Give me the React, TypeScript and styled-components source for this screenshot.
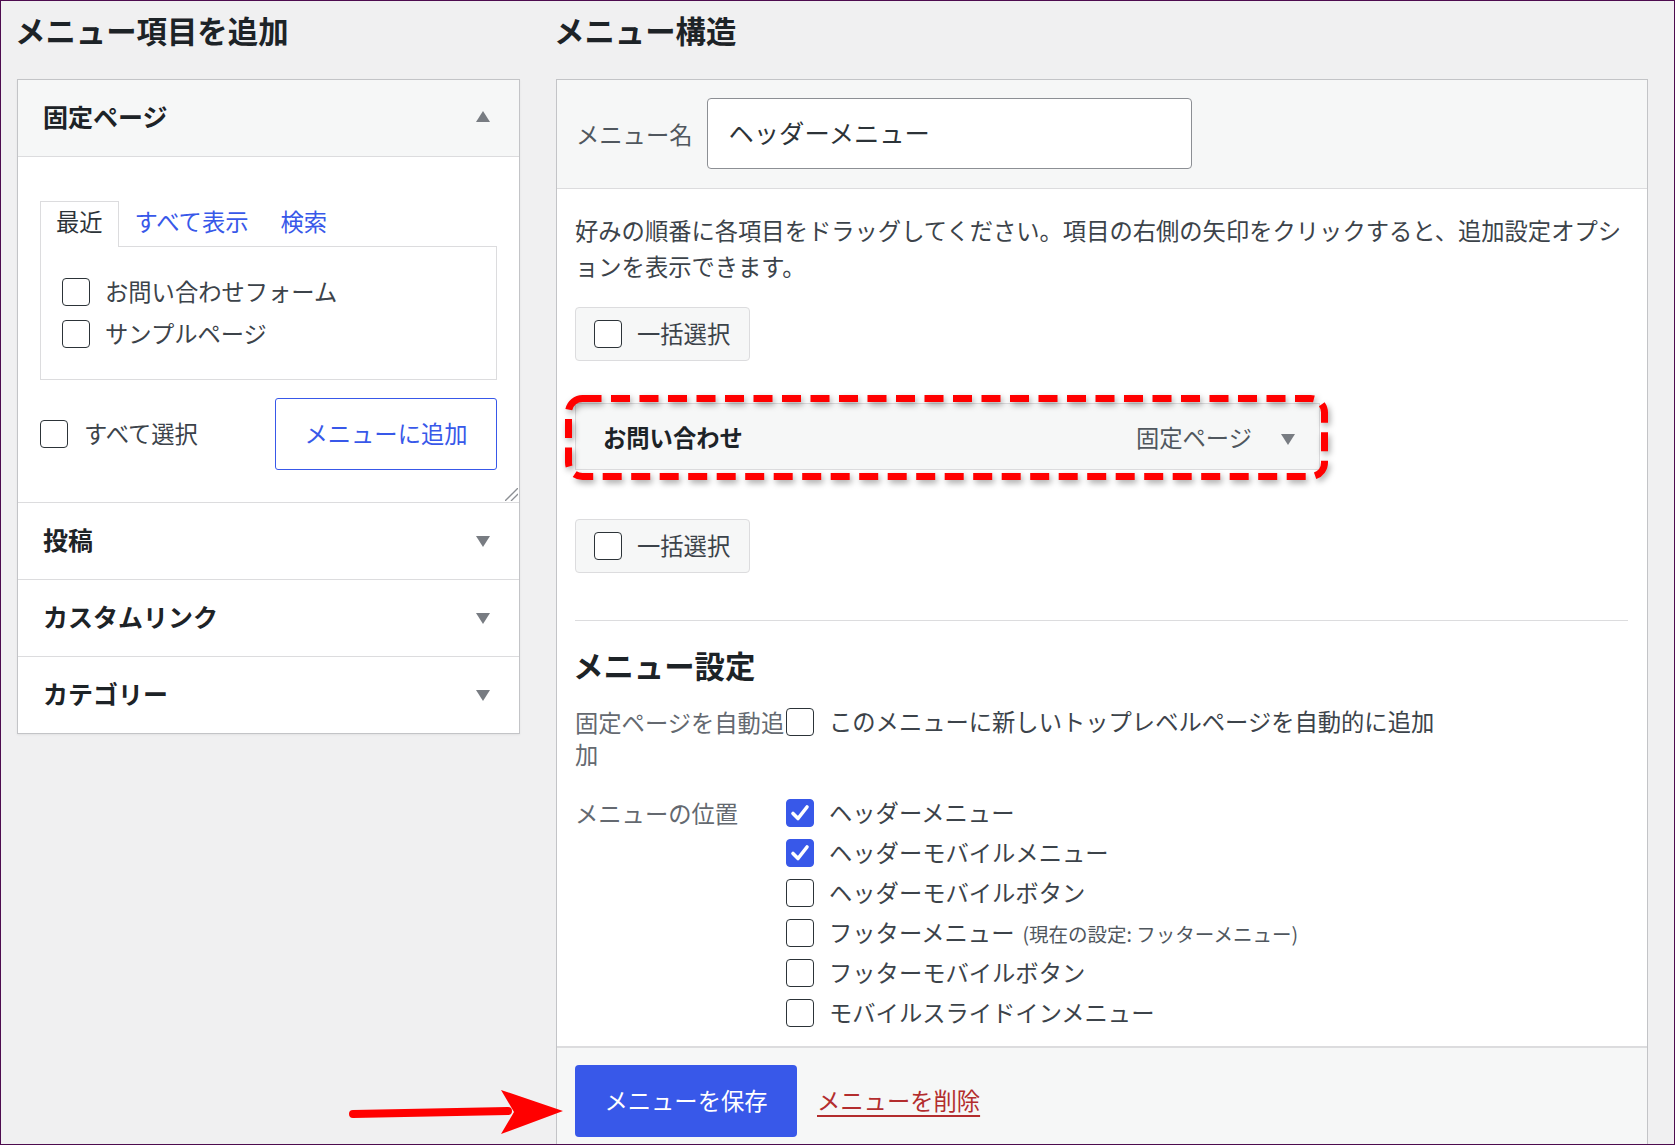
import React from "react";
import styled, { createGlobalStyle } from "styled-components";

const blue = "#3858e9";

const Caret: React.FC<{ up?: boolean }> = ({ up }) => (
  <CaretIcon $up={up} width="14" height="11" viewBox="0 0 14 11">
    <polygon
      points={up ? "7,0 14,11 0,11" : "0,0 14,0 7,11"}
      fill="#787c82"
    />
  </CaretIcon>
);

const Checkbox: React.FC<{ checked?: boolean }> = ({ checked }) => (
  <Box $checked={checked}>
    {checked && (
      <svg width="22" height="22" viewBox="0 0 22 22">
        <path
          d="M4 11.5 L9 16.5 L18 5"
          fill="none"
          stroke="#fff"
          strokeWidth="3.6"
          strokeLinecap="round"
          strokeLinejoin="round"
        />
      </svg>
    )}
  </Box>
);

const locations = [
  { label: "ヘッダーメニュー", checked: true },
  { label: "ヘッダーモバイルメニュー", checked: true },
  { label: "ヘッダーモバイルボタン" },
  { label: "フッターメニュー", note: "(現在の設定: フッターメニュー)" },
  { label: "フッターモバイルボタン" },
  { label: "モバイルスライドインメニュー" },
];

const App: React.FC = () => {
  return (
    <>
      <GlobalStyle />
      <Page>
        <LeftColumn>
          <PageTitle>メニュー項目を追加</PageTitle>
          <Panel>
            <SectionHeader $open>
              固定ページ
              <Caret up />
            </SectionHeader>
            <SectionBody>
              <TabList>
                <Tab $active>最近</Tab>
                <Tab>すべて表示</Tab>
                <Tab>検索</Tab>
              </TabList>
              <TabPanel>
                <ItemRow>
                  <Checkbox />
                  <Label>お問い合わせフォーム</Label>
                </ItemRow>
                <ItemRow>
                  <Checkbox />
                  <Label>サンプルページ</Label>
                </ItemRow>
              </TabPanel>
              <PanelActions>
                <SelectAll>
                  <Checkbox />
                  <Label>すべて選択</Label>
                </SelectAll>
                <OutlineButton>メニューに追加</OutlineButton>
              </PanelActions>
              <ResizeGrip width="13" height="13" viewBox="0 0 13 13">
                <line x1="13" y1="0" x2="0" y2="13" stroke="#8c8f94" strokeWidth="1.3" />
                <line x1="13" y1="6" x2="6" y2="13" stroke="#8c8f94" strokeWidth="1.3" />
              </ResizeGrip>
            </SectionBody>
            <SectionHeader>
              投稿
              <Caret />
            </SectionHeader>
            <SectionHeader>
              カスタムリンク
              <Caret />
            </SectionHeader>
            <SectionHeader>
              カテゴリー
              <Caret />
            </SectionHeader>
          </Panel>
        </LeftColumn>

        <RightColumn>
          <PageTitle>メニュー構造</PageTitle>
          <StructurePanel>
            <NameBar>
              <NameLabel>メニュー名</NameLabel>
              <NameInput value="ヘッダーメニュー" readOnly />
            </NameBar>
            <EditBody>
              <Description>
                好みの順番に各項目をドラッグしてください。項目の右側の矢印をクリックすると、追加設定オプションを表示できます。
              </Description>
              <BulkSelect $top={23}>
                <Checkbox />
                <Label>一括選択</Label>
              </BulkSelect>
              <MenuItemWrap>
                <MenuItem>
                  <ItemTitle>お問い合わせ</ItemTitle>
                  <ItemType>固定ページ</ItemType>
                  <Caret />
                </MenuItem>
                <Highlight width="763" height="85" viewBox="0 0 763 85">
                  <rect
                    x="3.5"
                    y="3.5"
                    width="756"
                    height="78"
                    rx="14"
                    fill="none"
                    stroke="#ff0000"
                    strokeWidth="7"
                    strokeDasharray="19 9.5"
                  />
                </Highlight>
              </MenuItemWrap>
              <BulkSelect $top={49}>
                <Checkbox />
                <Label>一括選択</Label>
              </BulkSelect>
              <Divider />
              <SettingsTitle>メニュー設定</SettingsTitle>
              <SettingsGrid>
                <FieldLabel $lh={32}>固定ページを自動追加</FieldLabel>
                <OptionRow $h={32}>
                  <Checkbox />
                  <Label>このメニューに新しいトップレベルページを自動的に追加</Label>
                </OptionRow>
                <FieldLabel $lh={40}>メニューの位置</FieldLabel>
                <OptionList>
                  {locations.map((loc) => (
                    <OptionRow $h={40} key={loc.label}>
                      <Checkbox checked={loc.checked} />
                      <Label>
                        {loc.label}
                        {loc.note && <Note>{loc.note}</Note>}
                      </Label>
                    </OptionRow>
                  ))}
                </OptionList>
              </SettingsGrid>
            </EditBody>
            <Footer>
              <PrimaryButton>メニューを保存</PrimaryButton>
              <DeleteLink href="#">メニューを削除</DeleteLink>
            </Footer>
          </StructurePanel>
        </RightColumn>

        <Arrow width="240" height="60" viewBox="0 0 240 60">
          <line x1="13" y1="34" x2="168" y2="31" stroke="#ff0000" strokeWidth="8" strokeLinecap="round" />
          <polygon points="161,10 223,31 161,54 174,32" fill="#ff0000" />
        </Arrow>
      </Page>
    </>
  );
};

export default App;

const GlobalStyle = createGlobalStyle`
  body {
    margin: 0;
    background: #f0f0f1;
    font-family: "Noto Sans CJK JP", "Noto Sans", sans-serif;
  }
`;

const Page = styled.div`
  position: relative;
  width: 1675px;
  height: 1145px;
  box-sizing: border-box;
  border: 1px solid #4d0b4f;
  background: #f0f0f1;
  overflow: hidden;
  display: flex;
  gap: 36px;
  padding: 9px 25px 0 16px;
  font-family: "Noto Sans CJK JP", "Noto Sans", sans-serif;
  font-size: 23.3px;
  color: #3c434a;
`;

const LeftColumn = styled.div`
  width: 503px;
  flex: none;
`;

const RightColumn = styled.div`
  width: 1092px;
  flex: none;
`;

const PageTitle = styled.h2`
  margin: 0 0 29px -2px;
  font-size: 30.4px;
  line-height: 40px;
  font-weight: 700;
  color: #1d2327;
`;

const Panel = styled.div`
  background: #fff;
  border: 1px solid #c3c4c7;
  box-shadow: 0 1px 2px rgba(0, 0, 0, 0.06);
`;

const SectionHeader = styled.div<{ $open?: boolean }>`
  display: flex;
  align-items: center;
  justify-content: space-between;
  height: 72px;
  padding: 0 29px 4px 25px;
  font-size: 25px;
  font-weight: 700;
  color: #1d2327;
  background: ${(p) => (p.$open ? "#f6f7f7" : "#fff")};
  border-top: ${(p) => (p.$open ? "none" : "1px solid #dcdcde")};
  border-bottom: ${(p) => (p.$open ? "1px solid #dcdcde" : "none")};
`;

const CaretIcon = styled.svg<{ $up?: boolean }>`
  flex: none;
  margin-bottom: ${(p) => (p.$up ? "0" : "-5px")};
`;

const SectionBody = styled.div`
  position: relative;
  padding: 44px 22px 32px;
`;

const TabList = styled.div`
  display: flex;
  align-items: flex-start;
  height: 45px;
`;

const Tab = styled.div<{ $active?: boolean }>`
  position: relative;
  z-index: 1;
  display: flex;
  align-items: center;
  box-sizing: border-box;
  height: 46px;
  padding: 0 15px 7px;
  border: 1px solid ${(p) => (p.$active ? "#dcdcde" : "transparent")};
  border-bottom: none;
  background: ${(p) => (p.$active ? "#fff" : "transparent")};
  color: ${(p) => (p.$active ? "#2c3338" : blue)};
`;

const TabPanel = styled.div`
  display: flex;
  flex-direction: column;
  border: 1px solid #dcdcde;
  padding: 24px 21px 24px;
`;

const Label = styled.span`
  padding-bottom: 3px;
`;

const ItemRow = styled.label`
  display: flex;
  align-items: center;
  gap: 15px;
  height: 42px;
  color: #3c434a;
`;

const PanelActions = styled.div`
  display: flex;
  align-items: center;
  justify-content: space-between;
  margin-top: 18px;
`;

const SelectAll = styled.label`
  display: flex;
  align-items: center;
  gap: 16px;
  color: #3c434a;
`;

const OutlineButton = styled.button`
  width: 222px;
  height: 72px;
  box-sizing: border-box;
  padding: 0 0 3px;
  border: 1px solid ${blue};
  border-radius: 3px;
  background: #fff;
  color: ${blue};
  font-family: inherit;
  font-size: 23.3px;
`;

const ResizeGrip = styled.svg`
  position: absolute;
  right: 1px;
  bottom: 1px;
`;

const Box = styled.span<{ $checked?: boolean }>`
  display: inline-flex;
  align-items: center;
  justify-content: center;
  flex: none;
  width: 28px;
  height: 28px;
  box-sizing: border-box;
  border: 1px solid ${(p) => (p.$checked ? blue : "#2c3338")};
  border-radius: 4px;
  background: ${(p) => (p.$checked ? blue : "#fff")};
`;

const StructurePanel = styled.div`
  background: #fff;
  border: 1px solid #c3c4c7;
  border-bottom: none;
`;

const NameBar = styled.div`
  display: flex;
  align-items: center;
  gap: 15px;
  height: 106px;
  padding: 0 19px 2px;
  background: #f6f7f7;
  border-bottom: 1px solid #dcdcde;
`;

const NameLabel = styled.span`
  padding-top: 2px;
  color: #50575e;
`;

const NameInput = styled.input`
  width: 485px;
  height: 71px;
  box-sizing: border-box;
  padding: 0 20px 3px;
  border: 1px solid #8c8f94;
  border-radius: 4px;
  background: #fff;
  font-family: inherit;
  font-size: 25.3px;
  color: #2c3338;
  outline: none;
`;

const EditBody = styled.div`
  padding: 23px 19px 13px 18px;
`;

const Description = styled.p`
  margin: 0;
  line-height: 36px;
  color: #3c434a;
  line-break: loose;
`;

const BulkSelect = styled.label<{ $top: number }>`
  display: flex;
  width: fit-content;
  align-items: center;
  gap: 15px;
  height: 54px;
  box-sizing: border-box;
  margin-top: ${(p) => p.$top}px;
  padding: 0 19px 0 18px;
  background: #f6f7f7;
  border: 1px solid #dcdcde;
  border-radius: 4px;
  color: #3c434a;
`;

const MenuItemWrap = styled.div`
  position: relative;
  width: 745px;
  margin-top: 42px;
`;

const MenuItem = styled.div`
  display: flex;
  align-items: center;
  height: 67px;
  box-sizing: border-box;
  padding: 0 24px 0 27px;
  background: #f6f7f7;
  border: 1px solid #dcdcde;
`;

const ItemTitle = styled.span`
  flex: 1;
  font-weight: 700;
  color: #1d2327;
`;

const ItemType = styled.span`
  margin-right: 29px;
  color: #50575e;
`;

const Highlight = styled.svg`
  position: absolute;
  left: -10px;
  top: -8px;
  pointer-events: none;
  overflow: visible;
  filter: drop-shadow(2px 3px 3px rgba(0, 0, 0, 0.35));
`;

const Divider = styled.div`
  margin-top: 47px;
  border-top: 1px solid #dcdcde;
`;

const SettingsTitle = styled.h3`
  margin: 24px 0 0 -2px;
  font-size: 30.4px;
  line-height: 40px;
  font-weight: 700;
  color: #1d2327;
`;

const SettingsGrid = styled.div`
  display: grid;
  grid-template-columns: 211px 1fr;
  row-gap: 23px;
  margin-top: 21px;
`;

const FieldLabel = styled.div<{ $lh: number }>`
  line-height: ${(p) => p.$lh}px;
  color: #646970;
`;

const OptionList = styled.div`
  display: flex;
  flex-direction: column;
`;

const OptionRow = styled.label<{ $h: number }>`
  display: flex;
  align-items: center;
  gap: 15px;
  height: ${(p) => p.$h}px;
  color: #3c434a;
  white-space: nowrap;
`;

const Note = styled.span`
  margin-left: 8px;
  font-size: 19.5px;
  color: #50575e;
`;

const Footer = styled.div`
  display: flex;
  align-items: center;
  gap: 20px;
  padding: 17px 18px 18px;
  background: #f6f7f7;
  border-top: 2px solid #dcdcde;
`;

const PrimaryButton = styled.button`
  width: 222px;
  height: 72px;
  padding: 0 0 3px;
  border: none;
  border-radius: 4px;
  background: ${blue};
  color: #fff;
  font-family: inherit;
  font-size: 23.3px;
`;

const DeleteLink = styled.a`
  padding-bottom: 3px;
  color: #b32d2e;
  text-decoration: underline;
  text-decoration-thickness: 2px;
  text-underline-offset: 5px;
`;

const Arrow = styled.svg`
  position: absolute;
  left: 339px;
  top: 1079px;
  z-index: 2;
`;
